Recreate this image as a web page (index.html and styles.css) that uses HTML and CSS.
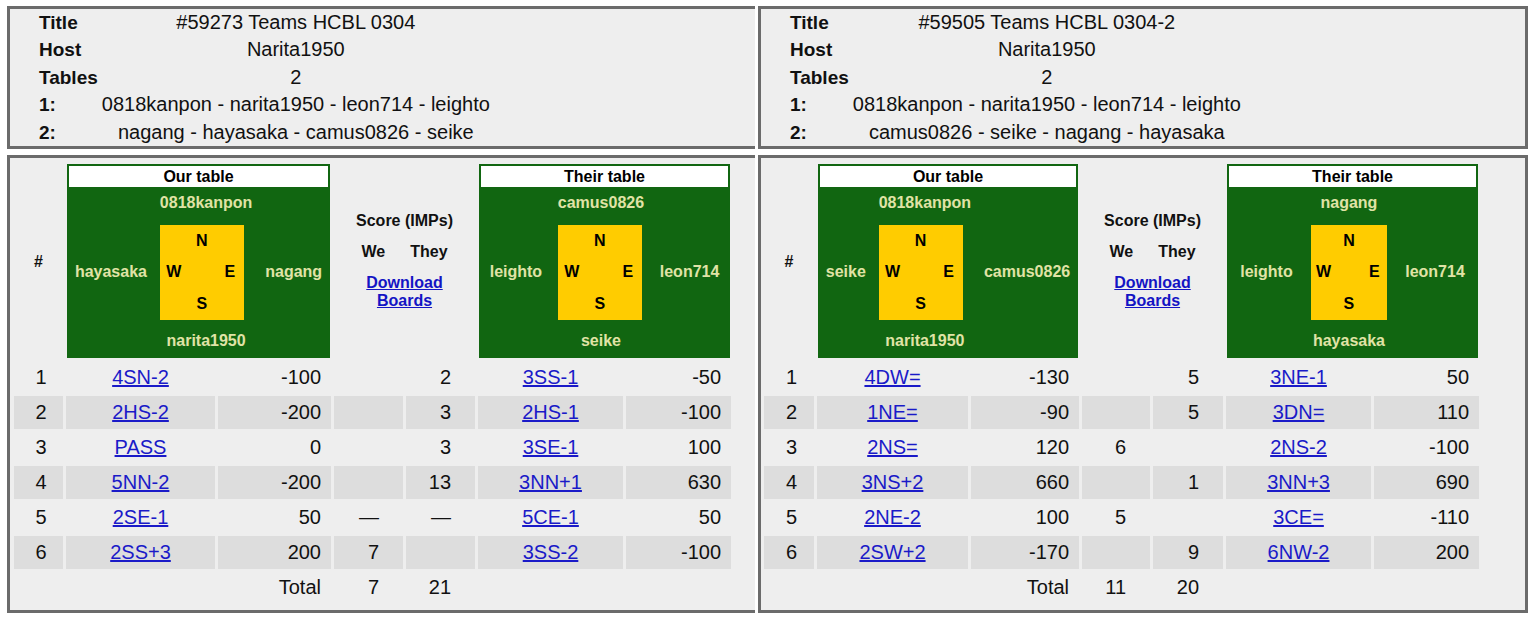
FILE: index.html
```html
<!DOCTYPE html>
<html>
<head>
<meta charset="utf-8">
<title>Team match</title>
<link rel="stylesheet" href="styles.css">
</head>
<body>
<div class="page">
  <div class="panel panel--left">
    <div class="box info">
      <table>
        <tr><td class="lbl">Title</td><td class="val">#59273 Teams HCBL 0304</td></tr>
        <tr><td class="lbl">Host</td><td class="val">Narita1950</td></tr>
        <tr><td class="lbl">Tables</td><td class="val">2</td></tr>
        <tr><td class="lbl">1:</td><td class="val">0818kanpon - narita1950 - leon714 - leighto</td></tr>
        <tr><td class="lbl">2:</td><td class="val">nagang - hayasaka - camus0826 - seike</td></tr>
      </table>
    </div>
    <div class="box match">
      <table class="scores scores--a">
        <colgroup><col class="k1"><col class="k2"><col class="k3"><col class="k4"><col class="k5"><col class="k6"><col class="k7"></colgroup>
        <tr class="hdr">
          <td class="hash">#</td>
          <td colspan="2">
            <div class="seatbox">
              <div class="cap">Our table</div>
              <div class="seats">
                <div class="side side--w">hayasaka</div>
                <div class="mid">
                  <div class="nm nm--top">0818kanpon</div>
                  <div class="cwrap"><div class="compass"><span class="cn">N</span><span class="cw">W</span><span class="ce">E</span><span class="cs">S</span></div></div>
                  <div class="nm nm--bot">narita1950</div>
                </div>
                <div class="side side--e">nagang</div>
              </div>
            </div>
          </td>
          <td colspan="2" class="imps">
            <div class="imps-in">
              <div class="ln">Score (IMPs)</div>
              <div class="ln wt"><span>We</span><span>They</span></div>
              <a class="dl" href="#">Download<br>Boards</a>
            </div>
          </td>
          <td colspan="2">
            <div class="seatbox">
              <div class="cap">Their table</div>
              <div class="seats">
                <div class="side side--w">leighto</div>
                <div class="mid">
                  <div class="nm nm--top">camus0826</div>
                  <div class="cwrap"><div class="compass"><span class="cn">N</span><span class="cw">W</span><span class="ce">E</span><span class="cs">S</span></div></div>
                  <div class="nm nm--bot">seike</div>
                </div>
                <div class="side side--e">leon714</div>
              </div>
            </div>
          </td>
        </tr>
        <tr><td class="n">1</td><td class="c"><a href="#">4SN-2</a></td><td class="s">-100</td><td class="w"></td><td class="w">2</td><td class="c"><a href="#">3SS-1</a></td><td class="s">-50</td></tr>
        <tr class="alt"><td class="n">2</td><td class="c"><a href="#">2HS-2</a></td><td class="s">-200</td><td class="w"></td><td class="w">3</td><td class="c"><a href="#">2HS-1</a></td><td class="s">-100</td></tr>
        <tr><td class="n">3</td><td class="c"><a href="#">PASS</a></td><td class="s">0</td><td class="w"></td><td class="w">3</td><td class="c"><a href="#">3SE-1</a></td><td class="s">100</td></tr>
        <tr class="alt"><td class="n">4</td><td class="c"><a href="#">5NN-2</a></td><td class="s">-200</td><td class="w"></td><td class="w">13</td><td class="c"><a href="#">3NN+1</a></td><td class="s">630</td></tr>
        <tr><td class="n">5</td><td class="c"><a href="#">2SE-1</a></td><td class="s">50</td><td class="w">—</td><td class="w">—</td><td class="c"><a href="#">5CE-1</a></td><td class="s">50</td></tr>
        <tr class="alt"><td class="n">6</td><td class="c"><a href="#">2SS+3</a></td><td class="s">200</td><td class="w">7</td><td class="w"></td><td class="c"><a href="#">3SS-2</a></td><td class="s">-100</td></tr>
        <tr><td class="n"></td><td class="c"></td><td class="s">Total</td><td class="w">7</td><td class="w">21</td><td class="c"></td><td class="s"></td></tr>
      </table>
    </div>
  </div>

  <div class="panel panel--right">
    <div class="box info">
      <table>
        <tr><td class="lbl">Title</td><td class="val">#59505 Teams HCBL 0304-2</td></tr>
        <tr><td class="lbl">Host</td><td class="val">Narita1950</td></tr>
        <tr><td class="lbl">Tables</td><td class="val">2</td></tr>
        <tr><td class="lbl">1:</td><td class="val">0818kanpon - narita1950 - leon714 - leighto</td></tr>
        <tr><td class="lbl">2:</td><td class="val">camus0826 - seike - nagang - hayasaka</td></tr>
      </table>
    </div>
    <div class="box match">
      <table class="scores scores--b">
        <colgroup><col class="k1"><col class="k2"><col class="k3"><col class="k4"><col class="k5"><col class="k6"><col class="k7"></colgroup>
        <tr class="hdr">
          <td class="hash">#</td>
          <td colspan="2">
            <div class="seatbox">
              <div class="cap">Our table</div>
              <div class="seats">
                <div class="side side--w">seike</div>
                <div class="mid">
                  <div class="nm nm--top">0818kanpon</div>
                  <div class="cwrap"><div class="compass"><span class="cn">N</span><span class="cw">W</span><span class="ce">E</span><span class="cs">S</span></div></div>
                  <div class="nm nm--bot">narita1950</div>
                </div>
                <div class="side side--e">camus0826</div>
              </div>
            </div>
          </td>
          <td colspan="2" class="imps">
            <div class="imps-in">
              <div class="ln">Score (IMPs)</div>
              <div class="ln wt"><span>We</span><span>They</span></div>
              <a class="dl" href="#">Download<br>Boards</a>
            </div>
          </td>
          <td colspan="2">
            <div class="seatbox">
              <div class="cap">Their table</div>
              <div class="seats">
                <div class="side side--w">leighto</div>
                <div class="mid mid--center">
                  <div class="nm nm--top">nagang</div>
                  <div class="cwrap"><div class="compass compass--narrow"><span class="cn">N</span><span class="cw">W</span><span class="ce">E</span><span class="cs">S</span></div></div>
                  <div class="nm nm--bot">hayasaka</div>
                </div>
                <div class="side side--e">leon714</div>
              </div>
            </div>
          </td>
        </tr>
        <tr><td class="n">1</td><td class="c"><a href="#">4DW=</a></td><td class="s">-130</td><td class="w"></td><td class="w">5</td><td class="c"><a href="#">3NE-1</a></td><td class="s">50</td></tr>
        <tr class="alt"><td class="n">2</td><td class="c"><a href="#">1NE=</a></td><td class="s">-90</td><td class="w"></td><td class="w">5</td><td class="c"><a href="#">3DN=</a></td><td class="s">110</td></tr>
        <tr><td class="n">3</td><td class="c"><a href="#">2NS=</a></td><td class="s">120</td><td class="w">6</td><td class="w"></td><td class="c"><a href="#">2NS-2</a></td><td class="s">-100</td></tr>
        <tr class="alt"><td class="n">4</td><td class="c"><a href="#">3NS+2</a></td><td class="s">660</td><td class="w"></td><td class="w">1</td><td class="c"><a href="#">3NN+3</a></td><td class="s">690</td></tr>
        <tr><td class="n">5</td><td class="c"><a href="#">2NE-2</a></td><td class="s">100</td><td class="w">5</td><td class="w"></td><td class="c"><a href="#">3CE=</a></td><td class="s">-110</td></tr>
        <tr class="alt"><td class="n">6</td><td class="c"><a href="#">2SW+2</a></td><td class="s">-170</td><td class="w"></td><td class="w">9</td><td class="c"><a href="#">6NW-2</a></td><td class="s">200</td></tr>
        <tr><td class="n"></td><td class="c"></td><td class="s">Total</td><td class="w">11</td><td class="w">20</td><td class="c"></td><td class="s"></td></tr>
      </table>
    </div>
  </div>
</div>
</body>
</html>
```

FILE: styles.css
```css
* { box-sizing: border-box; }
html, body { margin: 0; padding: 0; background: #fff; }
body {
  font-family: "Liberation Sans", Arial, sans-serif;
  color: #111;
  width: 1536px;
  height: 620px;
  overflow: hidden;
}
.page { display: flex; gap: 3px; padding: 6px 0 0 7px; }
.panel { display: flex; flex-direction: column; gap: 6px; }
.panel--left { width: 748px; }
.panel--right { width: 770px; }
.box { background: #eee; border: 3px solid #6b6b6b; }
.panel--left .box { border-right: none; }

/* info box */
.info { height: 143px; padding: 0 0 0 26px; }
.info table { border-spacing: 2px; border-collapse: separate; margin-top: -1.5px; }
.info td { padding: 1px; line-height: 23.6px; font-size: 20px; white-space: nowrap; }
.info .lbl { font-weight: bold; font-size: 19px; }
.info .val { text-align: center; }

/* match box */
.match { height: 458px; padding: 3px 0 3px 1px; }
.panel--right .match { padding-left: 0; }
.scores {
  border-collapse: separate;
  border-spacing: 3px 2px;
  table-layout: fixed;
  width: 723px;
  font-size: 20px;
}
.scores--a .k1 { width: 49px; }
.scores--a .k2 { width: 149px; }
.scores--a .k3 { width: 113px; }
.scores--a .k4 { width: 69px; }
.scores--a .k5 { width: 69px; }
.scores--a .k6 { width: 145px; }
.scores--a .k7 { width: 105px; }
.scores--b { width: 721px; }
.scores--b .k1 { width: 50px; }
.scores--b .k2 { width: 151px; }
.scores--b .k3 { width: 108px; }
.scores--b .k4 { width: 68px; }
.scores--b .k5 { width: 70px; }
.scores--b .k6 { width: 145px; }
.scores--b .k7 { width: 105px; }

.scores td { padding: 5px 1px; line-height: 23px; white-space: nowrap; vertical-align: middle; }
.scores .hdr td { padding: 1px; }
.scores .hdr .hash { text-align: center; font-size: 16px; font-weight: bold; }
.scores tr.alt td { background: #ddd; }
.scores .n { text-align: center; padding-left: 6px; }
.scores .c { text-align: center; }
.scores .s { text-align: right; padding-right: 10px; }
.scores .w { text-align: right; padding-right: 24px; }
.scores a { color: #1a1ac8; text-decoration: underline; }

/* IMPs header */
.imps { text-align: center; font-size: 16px; font-weight: bold; }
.imps-in { display: flex; flex-direction: column; align-items: center; gap: 12.6px; line-height: 18.4px; color: #111; }
.wt { display: flex; gap: 25px; }
.scores .dl { color: #1414c4; line-height: 18.4px; }

/* seat diagram */
.seatbox {
  background: #116611;
  padding: 2px;
  height: 194px;
  display: flex;
  flex-direction: column;
}
.cap {
  background: #fff;
  height: 21px;
  line-height: 21px;
  text-align: center;
  font-size: 16px;
  font-weight: bold;
  color: #000;
}
.seats {
  display: flex;
  height: 169px;
  font-size: 16px;
  font-weight: bold;
  line-height: 18.4px;
  color: #e0e3a6;
}
.side {
  flex: 1 1 auto;
  display: flex;
  align-items: center;
  justify-content: center;
  white-space: nowrap;
  padding-top: 32px;
  padding-bottom: 30px;
}
.side--w { padding-right: 7px; }
.side--e { padding-left: 7px; }
.mid { flex: none; display: flex; flex-direction: column; }
.nm { display: flex; align-items: center; justify-content: center; white-space: nowrap; }
.nm--top { height: 32px; }
.nm--bot { height: 30px; }
.cwrap { height: 107px; display: flex; align-items: center; }
.mid--center .cwrap { justify-content: center; }
.compass {
  width: 84px;
  height: 95px;
  background: #ffcc00;
  display: grid;
  grid-template-columns: repeat(3, 1fr);
  grid-template-rows: repeat(3, 1fr);
  color: #000;
  font-size: 16px;
  font-weight: bold;
}
.compass--narrow { width: 76px; }
.compass span { display: flex; align-items: center; justify-content: center; }
.cn { grid-column: 2; grid-row: 1; }
.cw { grid-column: 1; grid-row: 2; }
.ce { grid-column: 3; grid-row: 2; }
.cs { grid-column: 2; grid-row: 3; }
```
